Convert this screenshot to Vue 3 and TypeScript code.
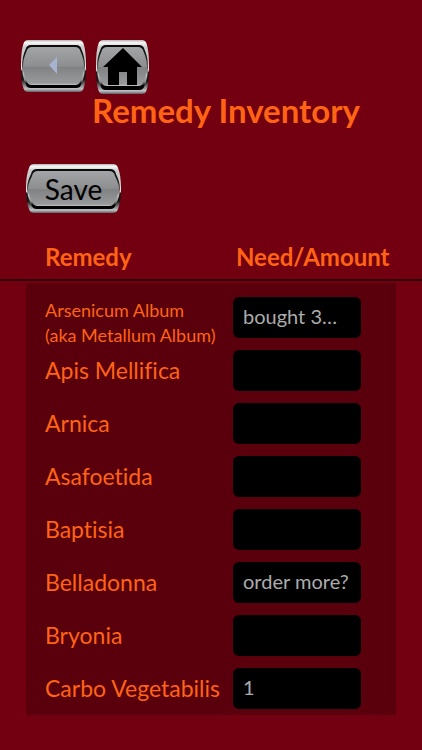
<script setup lang="ts">
import { ref } from 'vue'

interface Remedy {
  id: string
  lines: string[]
  amount: string
}

interface Frame {
  w: number
  h: number
}

const back: Frame = { w: 65, h: 52 }
const home: Frame = { w: 53, h: 54 }
const saveFrame: Frame = { w: 95, h: 49 }

// Barrel outline: flat top and bottom, corners of size k, sides that bow outwards
function barrel({ w, h }: Frame, inset: number, top: number, bottom: number, k: number): string {
  const l = inset
  const r = w - inset
  const t = top
  const b = h - bottom
  const m = h / 2
  const c = k / 2
  return (
    `M${l + k},${t} H${r - k} Q${r - c},${t} ${r - c + 1},${t + c} Q${r},${t + k + 3} ${r},${m} ` +
    `Q${r},${b - k - 3} ${r - c + 1},${b - c} Q${r - c},${b} ${r - k},${b} H${l + k} ` +
    `Q${l + c},${b} ${l + c - 1},${b - c} Q${l},${b - k - 3} ${l},${m} ` +
    `Q${l},${t + k + 3} ${l + c - 1},${t + c} Q${l + c},${t} ${l + k},${t} Z`
  )
}

const remedies = ref<Remedy[]>([
  { id: 'arsenicum', lines: ['Arsenicum Album', '(aka Metallum Album)'], amount: 'bought 3…' },
  { id: 'apis', lines: ['Apis Mellifica'], amount: '' },
  { id: 'arnica', lines: ['Arnica'], amount: '' },
  { id: 'asafoetida', lines: ['Asafoetida'], amount: '' },
  { id: 'baptisia', lines: ['Baptisia'], amount: '' },
  { id: 'belladonna', lines: ['Belladonna'], amount: 'order more?' },
  { id: 'bryonia', lines: ['Bryonia'], amount: '' },
  { id: 'carbo', lines: ['Carbo Vegetabilis'], amount: '1' },
])
</script>

<template>
  <main class="screen">
    <svg class="defs" width="0" height="0" aria-hidden="true">
      <defs>
        <linearGradient id="chrome" x1="0" y1="0" x2="0" y2="1">
          <stop offset="0" stop-color="#b8b4b4" />
          <stop offset="0.05" stop-color="#f8f8f8" />
          <stop offset="0.13" stop-color="#cccccc" />
          <stop offset="0.3" stop-color="#c8c8c8" />
          <stop offset="0.56" stop-color="#ededed" />
          <stop offset="0.6" stop-color="#181818" />
          <stop offset="0.76" stop-color="#161616" />
          <stop offset="0.88" stop-color="#8d8d8f" />
          <stop offset="0.94" stop-color="#c2c2c6" />
          <stop offset="1" stop-color="#606064" />
        </linearGradient>
        <linearGradient id="rim" x1="0" y1="0" x2="0" y2="1">
          <stop offset="0" stop-color="#0a0a0a" />
          <stop offset="0.3" stop-color="#1c1c1c" />
          <stop offset="0.5" stop-color="#505050" />
          <stop offset="0.65" stop-color="#c0c0c0" />
          <stop offset="0.82" stop-color="#8a8a8a" />
          <stop offset="0.9" stop-color="#000" />
          <stop offset="1" stop-color="#000" />
        </linearGradient>
        <linearGradient id="face" x1="0" y1="0" x2="0" y2="1">
          <stop offset="0" stop-color="#a3a5a7" />
          <stop offset="0.5" stop-color="#8c8e90" />
          <stop offset="0.53" stop-color="#808284" />
          <stop offset="0.95" stop-color="#98999b" />
          <stop offset="1" stop-color="#c4c4c4" />
        </linearGradient>
      </defs>
    </svg>

    <header class="top">
      <nav class="nav">
        <button class="metal" type="button" aria-label="Back">
          <svg :width="back.w" :height="back.h" :viewBox="`0 0 ${back.w} ${back.h}`" aria-hidden="true">
            <path :d="barrel(back, 0, 0, 0, 7)" fill="url(#chrome)" />
            <path :d="barrel(back, 1, 5, 4, 9)" fill="url(#rim)" />
            <path :d="barrel(back, 2, 7, 7, 9)" fill="url(#face)" />
            <path d="M28 25 L36 17 V34 Z" fill="#a7b4d0" />
          </svg>
        </button>
        <button class="metal" type="button" aria-label="Home">
          <svg :width="home.w" :height="home.h" :viewBox="`0 0 ${home.w} ${home.h}`" aria-hidden="true">
            <path :d="barrel(home, 0, 0, 0, 7)" fill="url(#chrome)" />
            <path :d="barrel(home, 1, 5, 4, 9)" fill="url(#rim)" />
            <path :d="barrel(home, 2, 7, 8, 9)" fill="url(#face)" />
            <path d="M27 8 L7 27 H12 V45 H23 V32 H31 V45 H41 V27 H46 Z" fill="#000" />
          </svg>
        </button>
      </nav>
      <h1 class="title">Remedy Inventory</h1>
    </header>

    <form class="form" @submit.prevent>
      <button class="metal save" type="submit">
        <svg :width="saveFrame.w" :height="saveFrame.h" :viewBox="`0 0 ${saveFrame.w} ${saveFrame.h}`" aria-hidden="true">
          <path :d="barrel(saveFrame, 0, 0, 0, 8)" fill="url(#chrome)" />
          <path :d="barrel(saveFrame, 1, 5, 4, 10)" fill="url(#rim)" />
          <path :d="barrel(saveFrame, 2, 7, 7, 10)" fill="url(#face)" />
        </svg>
        <span class="save-text">Save</span>
      </button>

      <table class="inventory">
        <thead class="head">
          <tr class="cols">
            <th scope="col">Remedy</th>
            <th scope="col">Need/Amount</th>
          </tr>
        </thead>
        <tbody class="panel">
          <tr v-for="remedy in remedies" :key="remedy.id" class="cols row">
            <th scope="row">
              <label class="name" :class="{ small: remedy.lines.length > 1 }" :for="remedy.id">
                <span v-for="line in remedy.lines" :key="line" class="line">{{ line }}</span>
              </label>
            </th>
            <td><input :id="remedy.id" v-model="remedy.amount" class="amount" type="text" /></td>
          </tr>
        </tbody>
      </table>
    </form>
  </main>
</template>

<style>
body {
  margin: 0;
  background: #720010;
}
</style>

<style scoped>
.screen {
  box-sizing: border-box;
  min-height: 100vh;
  padding: 40px 0 32px;
  background: #720010;
  color: #ff6314;
  font-family: Optima, Lato, "Liberation Sans", sans-serif;
  font-variant-ligatures: none;
}

.defs {
  position: absolute;
}

.nav {
  display: flex;
  align-items: flex-start;
  gap: 10px;
  padding-left: 21px;
}

.metal {
  display: grid;
  place-items: center;
  padding: 0;
  border: 0;
  background: none;
  color: #000;
  font: inherit;
  cursor: pointer;
}

.metal > * {
  grid-area: 1 / 1;
}

.metal svg {
  display: block;
}

.title {
  margin: 0;
  padding-left: 30px;
  font-size: 33px;
  font-weight: 700;
  line-height: 32px;
  text-align: center;
}

.form {
  padding-top: 38px;
}

.save {
  margin-left: 26px;
}

.save-text {
  font-size: 28px;
  line-height: 32px;
}

.inventory,
.head,
.panel {
  display: block;
}

.head {
  padding: 27px 26px 5px;
  border-bottom: 2px solid #30000a;
}

.cols {
  display: grid;
  grid-template-columns: 188px 1fr;
  padding-left: 19px;
}

.cols th,
.cols td {
  padding: 0;
  text-align: left;
}

.head th {
  font-size: 24px;
  font-weight: 700;
  line-height: 34px;
}

.head th + th {
  padding-left: 3px;
}

.panel {
  display: grid;
  row-gap: 12px;
  margin: 2px 26px 0;
  padding: 14px 0 6px;
  background: #59000c;
}

.row {
  height: 41px;
  padding-right: 35px;
}

.row th {
  font-weight: 400;
}

.name {
  display: block;
  font-size: 23px;
  line-height: 41px;
  white-space: nowrap;
}

.small {
  padding-top: 1px;
  font-size: 18px;
  line-height: 25px;
}

.line {
  display: block;
}

.amount {
  display: block;
  box-sizing: border-box;
  width: 100%;
  height: 41px;
  padding: 0 10px 4px;
  border: 0;
  border-radius: 6px;
  background: #000;
  color: #acacac;
  font-family: inherit;
  font-size: 20px;
}
</style>
